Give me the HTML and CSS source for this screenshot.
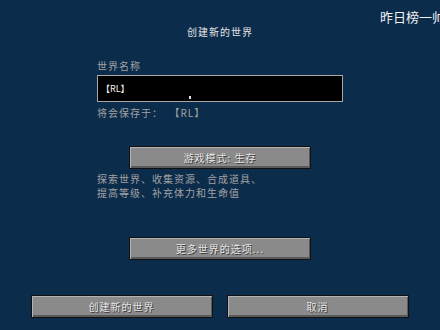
FILE: index.html
```html
<!DOCTYPE html>
<html lang="zh">
<head>
<meta charset="utf-8">
<link rel="stylesheet" href="styles.css">
</head>
<body>
<div class="screen">
  <div class="watermark">昨日榜一帅</div>
  <div class="title">创建新的世界</div>
  <div class="form">
    <div class="label">世界名称</div>
    <div class="field">【RL】<span class="pointer"></span></div>
    <div class="label save">将会保存于：&nbsp;&nbsp;【RL】</div>
  </div>
  <div class="btn mode">游戏模式: 生存</div>
  <div class="form desc">
    <div>探索世界、收集资源、合成道具、</div>
    <div>提高等级、补充体力和生命值</div>
  </div>
  <div class="btn more">更多世界的选项...</div>
  <div class="bottom">
    <div class="btn wide">创建新的世界</div>
    <div class="btn wide">取消</div>
  </div>
</div>
</body>
</html>
```
FILE: styles.css
```css
html, body {
  margin: 0;
  padding: 0;
}
body {
  width: 440px;
  height: 330px;
  overflow: hidden;
  font-family: "Noto Sans CJK SC", "Noto Sans", sans-serif;
}
.screen {
  position: relative;
  width: 440px;
  height: 330px;
  overflow: hidden;
  background: #0c2c4b;
  display: flex;
  flex-direction: column;
  align-items: center;
}
.watermark {
  position: absolute;
  left: 380px;
  top: 8px;
  font-size: 13px;
  line-height: 17px;
  color: #f2f2f2;
  white-space: nowrap;
}
.title {
  margin-top: 25px;
  height: 13px;
  line-height: 13px;
  font-size: 10px;
  letter-spacing: 1px;
  color: #e4e4e4;
}
.form {
  width: 246px;
}
.label {
  margin-top: 21px;
  line-height: 13px;
  height: 13px;
  font-size: 10px;
  letter-spacing: 1px;
  color: #a2a2a2;
}
.label.save {
  margin-top: 4px;
}
.field {
  position: relative;
  box-sizing: border-box;
  margin-top: 3px;
  height: 27px;
  background: #000;
  border: 1px solid #a8a8a8;
  color: #f0f0f0;
  font-size: 9px;
  line-height: 25px;
  padding-left: 3px;
}
.pointer {
  position: absolute;
  left: 91px;
  top: 20px;
  width: 2px;
  height: 3px;
  background: #e0e0e0;
}
.btn {
  box-sizing: border-box;
  width: 182px;
  height: 23px;
  background: #8a8a8a;
  border: 1px solid #111;
  box-shadow: inset 1px 1px 0 #b4b4b4, inset -1px -2px 0 #5a5a5a;
  color: #e6e6e6;
  font-size: 10px;
  letter-spacing: 1px;
  line-height: 21px;
  text-align: center;
  text-shadow: 1px 1px 0 #3a3a3a;
}
.mode {
  margin-top: 27px;
}
.desc {
  margin-top: 3px;
  font-size: 10px;
  letter-spacing: 1px;
  line-height: 14px;
  color: #a2a2a2;
}
.more {
  margin-top: 37px;
}
.bottom {
  margin-top: 35px;
  display: flex;
  gap: 14px;
  padding-right: 1px;
}
```
